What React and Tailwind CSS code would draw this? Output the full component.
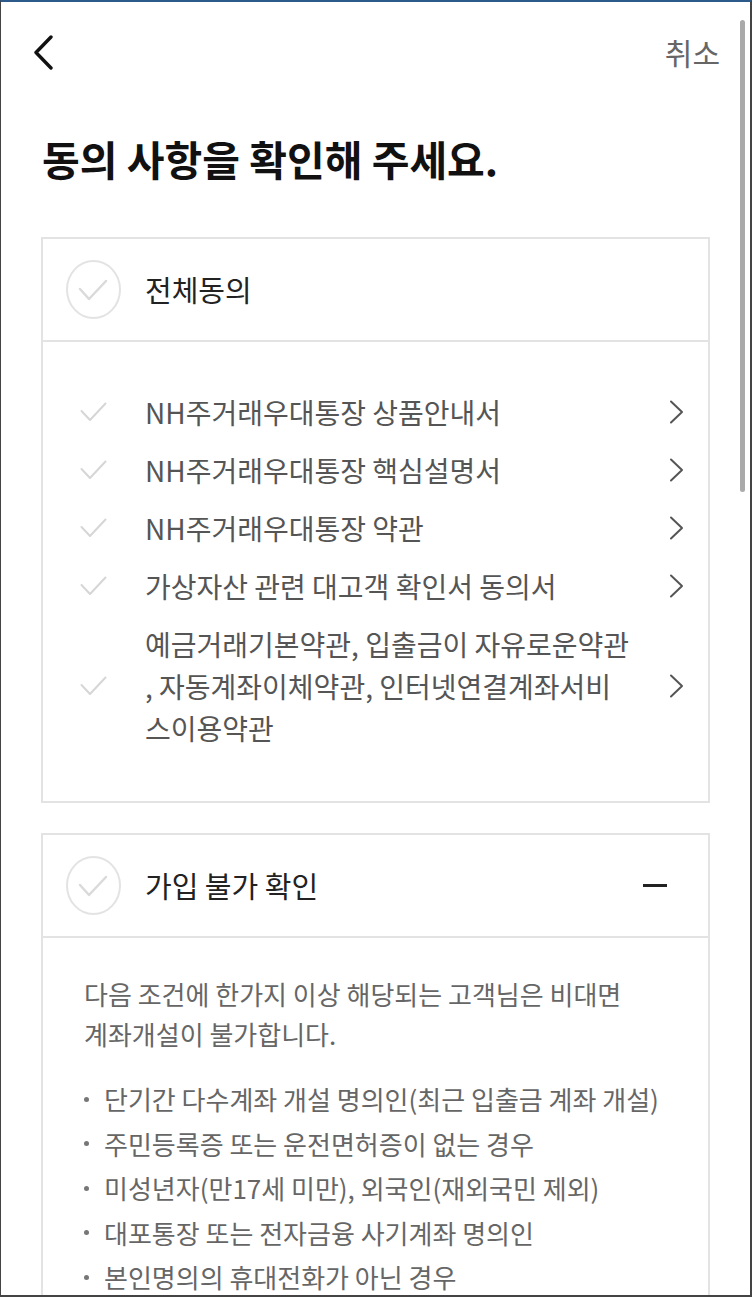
import React from "react";

const ITEMS = [
  ["NH주거래우대통장 상품안내서"],
  ["NH주거래우대통장 핵심설명서"],
  ["NH주거래우대통장 약관"],
  ["가상자산 관련 대고객 확인서 동의서"],
  ["예금거래기본약관, 입출금이 자유로운약관", ", 자동계좌이체약관, 인터넷연결계좌서비", "스이용약관"],
];

const BULLETS = [
  "단기간 다수계좌 개설 명의인(최근 입출금 계좌 개설)",
  "주민등록증 또는 운전면허증이 없는 경우",
  "미성년자(만17세 미만), 외국인(재외국민 제외)",
  "대포통장 또는 전자금융 사기계좌 명의인",
  "본인명의의 휴대전화가 아닌 경우",
];

function CircleCheck() {
  return (
    <svg width="55" height="59" viewBox="0 0 55 59" className="shrink-0">
      <ellipse cx="27.5" cy="29.5" rx="26.5" ry="28.5" fill="none" stroke="#e3e3e3" strokeWidth="2" />
      <path d="M14 29 L23 39 L40 21" fill="none" stroke="#dadada" strokeWidth="2.5" strokeLinecap="round" strokeLinejoin="round" />
    </svg>
  );
}

function SmallCheck() {
  return (
    <svg width="27" height="20" viewBox="0 0 27 20" className="shrink-0">
      <path d="M1.5 9 L10 18 L25.5 1.5" fill="none" stroke="#d6d6d6" strokeWidth="2" strokeLinecap="round" strokeLinejoin="round" />
    </svg>
  );
}

function Chevron() {
  return (
    <svg width="15" height="24" viewBox="0 0 15 24" className="shrink-0">
      <path d="M2 1.5 L13 12 L2 22.5" fill="none" stroke="#555" strokeWidth="2" strokeLinecap="round" strokeLinejoin="round" />
    </svg>
  );
}

export default function App() {
  return (
    <div className="relative h-[1297px] w-[752px] overflow-hidden bg-white border-t-2 border-t-[#2c5a8a] border-l border-l-[#444] border-r-2 border-r-[#444] border-b-2 border-b-[#444] font-['Noto_Sans_CJK_KR','Noto_Sans',sans-serif]">
      {/* header */}
      <div className="flex h-[100px] items-center justify-between pl-[32px] pr-[30px]">
        <svg width="21" height="35" viewBox="0 0 21 35">
          <path d="M18 2 L3 17.5 L18 33" fill="none" stroke="#111" strokeWidth="3.4" strokeLinecap="round" strokeLinejoin="round" />
        </svg>
        <span className="text-[30px] leading-none text-[#666]">취소</span>
      </div>

      <h1 className="mt-[32px] pl-[41px] text-[41px] font-bold leading-[48px] text-[#111]">
        동의 사항을 확인해 주세요.
      </h1>

      <div className="mt-[55px] px-[40px]">
        {/* all agree card */}
        <div className="border-2 border-[#e3e3e3]">
          <div className="flex h-[103px] items-center border-b-2 border-[#e3e3e3] pl-[23px]">
            <CircleCheck />
            <span className="ml-[24px] text-[29px] text-[#222]">전체동의</span>
          </div>
          <div className="pt-[41px] pb-[44px] pl-[37px] pr-[24px]">
            {ITEMS.map((lines, i) => (
              <div key={i} className="flex items-center py-2">
                <SmallCheck />
                <div className="ml-[38px] flex-1 text-[28px] leading-[42px] text-[#555]">
                  {lines.map((l, j) => (
                    <div key={j} className="whitespace-nowrap">{l}</div>
                  ))}
                </div>
                <Chevron />
              </div>
            ))}
          </div>
        </div>

        {/* join restriction card */}
        <div className="mt-[30px] border-2 border-[#e3e3e3]">
          <div className="flex h-[103px] items-center border-b-2 border-[#e3e3e3] pl-[23px] pr-[41px]">
            <CircleCheck />
            <span className="ml-[24px] flex-1 text-[29px] text-[#222]">가입 불가 확인</span>
            <div className="h-[3px] w-[24px] bg-[#222]" />
          </div>
          <div className="px-[41px] pt-[36px] pb-10 text-[26px] text-[#666]">
            <p className="leading-[40px]">
              다음 조건에 한가지 이상 해당되는 고객님은 비대면
              <br />
              계좌개설이 불가합니다.
            </p>
            <ul className="mt-[23px]">
              {BULLETS.map((b) => (
                <li key={b} className="flex items-center leading-[44.5px]">
                  <span className="h-[5px] w-[5px] shrink-0 rounded-full bg-[#777]" />
                  <span className="ml-[15px] whitespace-nowrap">{b}</span>
                </li>
              ))}
            </ul>
          </div>
        </div>
      </div>

      {/* scrollbar */}
      <div className="absolute right-[5px] top-[18px] h-[472px] w-[5px] rounded-full bg-[#aaa]" />
    </div>
  );
}
